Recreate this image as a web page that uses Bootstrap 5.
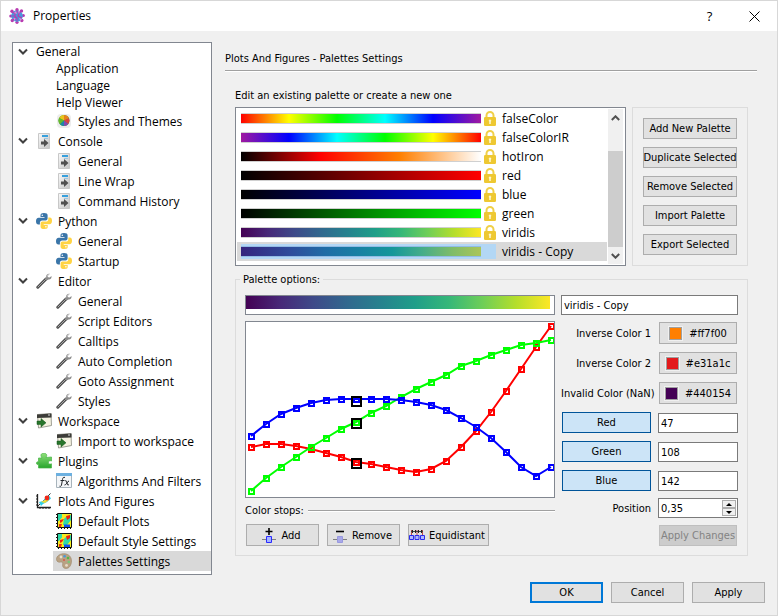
<!DOCTYPE html>
<html lang="en">
<head>
<meta charset="utf-8">
<meta name="viewport" content="width=device-width, initial-scale=1">
<title>Properties</title>
<link rel="stylesheet" href="https://cdn.jsdelivr.net/npm/bootstrap@5.3.0/dist/css/bootstrap.min.css">
<style>
  :root { --ui: "DejaVu Sans Condensed", "DejaVu Sans", sans-serif; --tree: "Open Sans", "Noto Sans", sans-serif; }
  body { background: #f0f0f0; color: #000; font: 11px/16px var(--ui); border: 1px solid #d7d7d7; }
  svg { display: block; flex: none; }
  .ic { width: 16px; height: 16px; }
  .titlebar { height: 30px; padding-left: 8px; font: 12px/16px var(--tree); }
  .titlebar button { width: 45px; height: 28px; font-size: 13px; }
  .plain { border: 0; background: none; padding: 0; color: inherit; }

  /* tree */
  .tree { width: 200px; margin: 11px 13px 0 11px; border: 1px solid #828790; font: 12px/16px var(--tree); }
  .tree ul { list-style: none; margin: 0; padding: 0; }
  .node { display: flex; align-items: center; gap: 6px; height: 20px; color: #000; text-decoration: none; white-space: nowrap; }
  .node span { padding-top: 1px; }
  .node.low { height: 17px; }
  .head { padding-left: 5px; }
  .head button { width: 10px; height: 10px; margin-right: 2px; }
  .kid { margin-left: 40px; padding-left: 3px; }
  .kid.chosen { background: #d9d9d9; }

  /* controls */
  .push { display: flex; align-items: center; justify-content: center; height: 21px; padding: 1px 0 0; border: 1px solid #adadad; border-radius: 0; background: #e1e1e1; color: #000; font: inherit; white-space: nowrap; }
  .push.tall { height: 22px; }
  .push.primary { border: 2px solid #0078d7; }
  .push.on { border-color: #005499; background: #cce4f7; }
  .push:disabled { border-color: #bfbfbf; background: #ccc; color: #838383; opacity: 1; }
  .dlg { width: 73px; }
  .stop-btn { gap: 4px; padding-right: 3px; }
  .field { height: 20px; min-width: 0; width: 100%; padding: 1px 2px 0; border: 1px solid #7a7a7a; border-radius: 0; background: #fff; color: #000; font: inherit; }
  .sunken { border: 1px solid #828790; background: #fff; }
  .rule { height: 2px; margin: 0; background: #a0a0a0; border-bottom: 1px solid #fff; }
  .frame { border: 1px solid #dcdcdc; }

  /* page column */
  .page { padding-top: 20px; margin-right: 20px; }
  .page .rule.title-rule { margin-top: 3px; }
  .page-body { padding: 16px 9px 0 10px; }
  .caption { margin-bottom: 3px; }
  .list { padding: 1px 2px 4px 1px; }
  .pal { display: flex; align-items: center; height: 19px; padding-left: 4px; margin-right: 1px; font: 12px/16px var(--tree); }
  .pal.chosen { background: #d9d9d9; }
  .pix { display: flex; align-items: center; gap: 3px; height: 15px; }
  .pal.chosen .pix { background: #b3d7f5; }
  .strip { height: 9px; box-shadow: 0 1px #d0d0d0, 0 -1px #d0d0d0; }
  .pal.chosen .strip { box-shadow: 0 1px #93bce4, 0 -1px #93bce4; }
  .lock { width: 12px; height: 15px; }
  .pal-name { width: 105px; margin-left: 6px; }
  .sbar { width: 15px; margin-bottom: -3px; background: #f0f0f0; }
  .sbar button { display: flex; width: 15px; height: 17px; align-items: center; justify-content: center; }
  .thumb { height: 96px; background: #cdcdcd; }
  .actions { width: 116px; margin-left: 6px; padding: 10px; }
  .actions .push { margin-bottom: 8px; width: 94px; }
  .options { padding: 8px 9px 9px; margin: 5px 0 0; min-width: 0; }
  .options legend { float: none; width: auto; margin: 0 0 0 -5px; padding: 1px 3px 0; font-size: 11px; line-height: 15px; }
  .opt-grid { display: grid; grid-template-columns: minmax(0, 1fr) 177px; column-gap: 6px; }
  .preview { height: 20px; padding: 0 4px 5px 0; }
  .preview div { height: 13px; }
  .chart-box { margin-top: 6px; }
  .chart { width: 100%; height: auto; }
  .stops-head { margin: 5px 0; }
  .stops { padding-left: 1px; }
  .props { display: grid; grid-template-columns: 90px minmax(0, 1fr); column-gap: 7px; row-gap: 8px; margin-top: 7px; align-items: center; }
  .props.tight { row-gap: 7px; }
  .props label { padding-top: 1px; text-align: right; white-space: nowrap; }
  .props .push { margin: 0 1px; }
  .props .push.on { margin: 0 0 0 1px; }
  .swatch { width: 13px; height: 13px; border: 1px solid #a0a0a0; outline: 1px solid #f0f0f0; margin-right: 7px; }
  .sw-1 { background: #ff7f00; }
  .sw-2 { background: #e31a1c; }
  .sw-3 { background: #440154; }
  .spin { height: 20px; padding: 1px; border: 1px solid #7a7a7a; background: #fff; }
  .spin .field { border: 0; height: 16px; padding: 1px 1px 0; }
  .spin button { display: flex; width: 14px; height: 8px; align-items: center; justify-content: center; border: 1px solid #adadad; background: #f0f0f0; padding: 0; }

  .g-false { background: linear-gradient(90deg, red, #ff0 20%, lime 40%, cyan 60%, blue 80%, #a01aa0); }
  .g-falseir { background: linear-gradient(90deg, #a01aa0, blue 20%, cyan 40%, lime 60%, #ff0 80%, red); }
  .g-iron { background: linear-gradient(90deg, #000, red 33%, #ff7f00 66%, #fff); }
  .g-red { background: linear-gradient(90deg, #000, red); }
  .g-blue { background: linear-gradient(90deg, #000, blue); }
  .g-green { background: linear-gradient(90deg, #000, lime); }
  .g-viridis { background: linear-gradient(90deg, #440154, #482878, #3e4a89, #31688e, #26828e, #1f9e89, #35b779, #6ece58, #b5de2b, #fde725); }
  .g-copy { background: linear-gradient(90deg, #35247d, #2f4b9b 20%, #1f6ca6 35%, #1782a3 50%, #15979a 63%, #43ac8a 75%, #7fbc69 88%, #abc559); }
  .dialog-foot { padding: 7px 12px 12px; gap: 8px; }
</style>
<script src="https://cdn.jsdelivr.net/npm/bootstrap@5.3.0/dist/js/bootstrap.bundle.min.js"></script>
</head>
<body class="d-flex flex-column min-vh-100">

<svg width="0" height="0" class="position-absolute" aria-hidden="true">
  <defs>
    <linearGradient id="paper" x2="1" y2="1"><stop stop-color="#fafafa"/><stop offset="1" stop-color="#c4c4c4"/></linearGradient>
    <linearGradient id="leaf" x2="0" y2="1"><stop stop-color="#8fe07a"/><stop offset="1" stop-color="#27a52c"/></linearGradient>
  </defs>
  <symbol id="i-chev" viewBox="0 0 10 10"><path d="M1 2.500l4 4 4-4" fill="none" stroke="#404040" stroke-width="2"/></symbol>
  <symbol id="i-app" viewBox="0 0 16 16">
    <g fill="#b83ab0"><circle cx="8" cy="1.800" r="1.700"/><circle cx="12.500" cy="3" r="1.700"/><circle cx="14.300" cy="7.500" r="1.600"/><circle cx="12.800" cy="12.500" r="1.700"/><circle cx="8" cy="14.300" r="1.600"/><circle cx="3.300" cy="12.500" r="1.700"/><circle cx="1.800" cy="8" r="1.600"/><circle cx="3" cy="3.300" r="1.700"/></g>
    <circle cx="8" cy="8" r="5.800" fill="#4a98dc"/>
    <path d="M3 4l3 1.500v3l2 1.500v3M12 3.500L10 5 9 8l4 2M3 8h3M4 12l3-3M8 2v3" fill="none" stroke="#b83ab0" stroke-width="1.200"/>
    <path d="M5 5l2-2 1 3zM10 10l3 1-1.500 2zM4.500 10l2 0-1 3zM9 3h2l-1 3z" fill="#e58ad8"/>
  </symbol>
  <symbol id="i-wheel" viewBox="0 0 16 16">
    <rect x="1" y="1" width="14" height="14" rx="4" fill="#ececec"/><circle cx="8" cy="7.500" r="5.500" fill="#3aa53f"/>
    <path d="M8 7.500V2a5.500 5.500 0 0 1 5 3.200z" fill="#e8801c"/><path d="M8 7.500V2A5.500 5.500 0 0 0 3.200 5z" fill="#e8c41c"/><path d="M8 7.500L3.200 5A5.500 5.500 0 0 0 4 11.300z" fill="#68b82c"/><path d="M8 7.500l-4 3.800A5.500 5.500 0 0 0 8 13z" fill="#1f86a8"/><path d="M8 7.500V13a5.500 5.500 0 0 0 4.500-2.300z" fill="#8648b0"/><path d="M8 7.500l4.500 3.200A5.500 5.500 0 0 0 13 5.200z" fill="#e04040"/>
  </symbol>
  <symbol id="i-console" viewBox="0 0 16 16">
    <path d="M2.500.5h11v15h-11z" fill="url(#paper)" stroke="#c8c8c8"/><path d="M6 2h6v2H6z" fill="#38a0dc"/><path d="M8 5h4v1H8z" fill="#9cc8e4"/>
    <path d="M5 8.500h3V6l4.500 4L8 14v-2.500H5z" fill="#505050"/>
  </symbol>
  <symbol id="i-python" viewBox="0 0 16 16">
    <path d="M8 0C5 0 4.500 1 4.500 2.300V4h4v.8H2.600C1 4.800 0 6 0 8.200s1 3.300 2.300 3.300h1.600V9.600c0-1.200 1-2.200 2.200-2.200h3.700c1 0 1.800-.8 1.800-1.800V2.300C11.600.8 10.500 0 8 0z" fill="#3a75a8"/>
    <path d="M8.200 16c3 0 3.500-1 3.500-2.300V12h-4v-.8h5.800c1.600 0 2.500-1.200 2.500-3.400s-.9-3.300-2.200-3.300h-1.500v1.900c0 1.200-1 2.200-2.200 2.200H6.400c-1 0-1.800.8-1.800 1.800v3.300c0 1.500 1.200 2.300 3.600 2.300z" fill="#ffd343"/>
    <circle cx="6.300" cy="2.200" r=".8" fill="#fff"/><circle cx="9.900" cy="13.800" r=".8" fill="#fff"/>
  </symbol>
  <symbol id="i-wrench" viewBox="0 0 16 16">
    <path d="M1.800 14.200L10 6" stroke="#4c4c4c" stroke-width="3" stroke-linecap="round"/><path d="M2 14l9-9" stroke="#a8a8a8" stroke-width="1" stroke-linecap="round"/>
    <path d="M13.800.8c-2-.5-4 1-3.800 3.200l-1 2 1.500 1.500 2-1c2 .2 3.500-1.500 3-3.500l-1.900 1.600-1.500-.4-.2-1.500z" fill="#8c8c8c"/><path d="M11 4.300l.3-2 2-1" stroke="#d8d8d8" stroke-width=".8" fill="none"/>
  </symbol>
  <symbol id="i-work" viewBox="0 0 16 16">
    <path d="M1.500 1.500L15 .5l.5 12-13 2.500z" fill="#f4f2e0" stroke="#8a8a80" stroke-width=".8"/><path d="M1 1.500L15.500.5v4L1 5z" fill="#3c3c38"/><path d="M12 2h2" stroke="#ddd"/>
    <path d="M1 8h4V5.500l5 4.300L5 14v-2.600H1z" fill="#28762c" stroke="#125016" stroke-width=".5"/>
  </symbol>
  <symbol id="i-plug" viewBox="0 0 16 16"><path d="M2.500 5H6C4 2 5 .3 7.800.3S11.500 2 10 4.500l5.500-.5v4c-2-.8-3 0-3 1.500s1.200 2 3 1.300V15h-13v-3.500C-.5 12 0 8 2.500 8.800z" fill="url(#leaf)" stroke="#48b545" stroke-width=".7"/></symbol>
  <symbol id="i-fx" viewBox="0 0 16 16"><path d="M.5.5h15v14H.5z" fill="#f4f6f8" stroke="#a8b4bc"/><path d="M0 0h16v3H0z" fill="#6cb0e0"/><path d="M9 4.500c-1.500-.8-2.200.2-2.500 2L5.500 12c-.3 1.300-1 1.700-2 1.200M4.500 7.500h4M9 8c1.500-.8 1.500 0 2 2s.7 2.500 2 1.500M13 8c-1.500 0-3 4.500-4.500 4" fill="none" stroke="#202428" stroke-width="1"/></symbol>
  <symbol id="i-plots" viewBox="0 0 16 16">
    <path d="M1.500 1v13.500H15" fill="none" stroke="#222" stroke-width="1.300"/><path d="M0 3h1M0 6h1M0 9h1M0 12h1M4 15v1M7 15v1M10 15v1M13 15v1" stroke="#222"/>
    <path d="M2 13L14.500.5" stroke="#333"/><path d="M3 9l4-1 3-4 3-1.500 2 3-4 3.500-4 2-2 2z" fill="#2fd0e8"/><path d="M5 9l4-2 2-3 2 3-4 3z" fill="#f4d830"/><circle cx="11" cy="5" r="2.400" fill="#f02818"/>
  </symbol>
  <symbol id="i-map" viewBox="0 0 16 16">
    <path d="M1.500.5h14v14h-14z" fill="#f6ee20"/>
    <path d="M2 1h4v4l-2 3H2zM8 5l7-3v5l-4 5H7z" fill="#30d8a8"/><path d="M9 1h3L8 6l-3 5-3 2V9z" fill="#f8e820"/><path d="M10 3l4-1v3l-3 2zM4 7l4-1-2 3-2 1z" fill="#f02010"/><path d="M8 11.500h6V14H8z" fill="#1050f0"/><path d="M3 11h3l-1 3H3z" fill="#f03010"/>
    <path d="M1.500.5h14v14h-14zM0 1.500h1M0 4.500h1M0 7.500h1M0 10.500h1M0 13.500h1M2.500 15v1M5.500 15v1M8.500 15v1M11.500 15v1M14.500 15v1" fill="none" stroke="#101010"/>
  </symbol>
  <symbol id="i-palette" viewBox="0 0 16 16">
    <path d="M9 .8C4 .3.3 3 .5 6.500c.2 2.600 2.400 3 4.200 2.600 1.500-.3 2.400.4 2 1.900-.5 2 .3 4.500 3.500 4.500 3 0 5.300-3.500 5.300-7.500S13 1.300 9 .8z" fill="#b9a284" stroke="#9c8668" stroke-width=".6"/>
    <circle cx="5" cy="4" r="1.400" fill="#e8e0d0"/><circle cx="8.600" cy="3.300" r="1.300" fill="#4898d8"/><circle cx="12" cy="5" r="1.300" fill="#50b848"/><circle cx="12.800" cy="9" r="1.300" fill="#78c878"/><circle cx="10.500" cy="12.400" r="1.400" fill="#e8dcc8"/><circle cx="8" cy="7" r="1" fill="#d85848"/>
  </symbol>
  <symbol id="i-lock" viewBox="0 0 12 15">
    <path d="M2.500 7V4.500a3.500 3.500 0 0 1 7 0V7" fill="none" stroke="#f0d048" stroke-width="2"/><rect y="6" width="12" height="9" rx="1.200" fill="#eec832"/><path d="M6 8.500a1.300 1.300 0 0 1 .8 2.300V13H5.200v-2.200A1.300 1.300 0 0 1 6 8.500z" fill="#fff6c8"/>
  </symbol>
  <symbol id="i-add" viewBox="0 0 16 16"><path d="M1 11.500h14" stroke="#808080"/><path d="M8 0v7M4.500 3.500h7" stroke="#000" stroke-width="1.600"/><path d="M5.500 8.500h5v6h-5z" fill="#a4b4ff" stroke="#2a2aff"/></symbol>
  <symbol id="i-rem" viewBox="0 0 16 16"><path d="M1 11.500h14" stroke="#808080"/><path d="M4 3.500h8" stroke="#000" stroke-width="1.600"/><path d="M5.500 8.500h5v6h-5z" fill="#a8a8e8" stroke="#9898e0"/></symbol>
  <symbol id="i-equi" viewBox="0 0 16 16"><path d="M2.500 2v5M8 2v5M13.500 2v5" stroke="#c04848"/><path d="M2 3.500h12" stroke="#444"/><path d="M3.500 2v3M6.500 2v3M9.500 2v3M12.500 2v3" stroke="#222"/><path d="M.5 7.500h4v4h-4zM6 7.500h4v4H6zM11.500 7.500h4v4h-4z" fill="#b0b8ff" stroke="#2a2aee"/></symbol>
</svg>

<header class="titlebar bg-white d-flex align-items-center">
  <svg class="ic"><use href="#i-app"/></svg>
  <span class="me-auto ms-1 ps-1">Properties</span>
  <button type="button" class="plain" aria-label="Help">?</button>
  <button type="button" class="plain d-flex align-items-center justify-content-center" aria-label="Close">
    <svg width="11" height="11" viewBox="0 0 11 11"><path d="M.5.5l10 10M10.500.5l-10 10" stroke="#000"/></svg>
  </button>
</header>

<main class="d-flex flex-grow-1">
  <nav class="tree bg-white flex-shrink-0" aria-label="Settings">
    <ul id="tree"></ul>
  </nav>

  <section class="page flex-grow-1">
    <div>Plots And Figures - Palettes Settings</div>
    <hr class="rule title-rule border-top-0 opacity-100">
    <div class="page-body">
      <div class="caption">Edit an existing palette or create a new one</div>
      <div class="d-flex">
        <div class="list sunken d-flex flex-grow-1">
          <div class="flex-grow-1" id="palettes"></div>
          <div class="sbar d-flex flex-column">
            <button type="button" class="plain" aria-label="Scroll up"><svg width="9" height="6" viewBox="0 0 9 6"><path d="M.8 5l3.700-3.700L8.200 5" fill="none" stroke="#505050" stroke-width="2"/></svg></button>
            <div class="thumb mt-auto"></div>
            <button type="button" class="plain" aria-label="Scroll down"><svg width="9" height="6" viewBox="0 0 9 6"><path d="M.8 1l3.700 3.700L8.200 1" fill="none" stroke="#505050" stroke-width="2"/></svg></button>
          </div>
        </div>
        <div class="actions frame flex-shrink-0">
          <button type="button" class="push">Add New Palette</button>
          <button type="button" class="push">Duplicate Selected</button>
          <button type="button" class="push">Remove Selected</button>
          <button type="button" class="push">Import Palette</button>
          <button type="button" class="push mb-0">Export Selected</button>
        </div>
      </div>

      <fieldset class="options frame">
        <legend>Palette options:</legend>
        <div class="opt-grid">
          <div>
            <div class="preview sunken"><div class="g-viridis"></div></div>
            <div class="sunken chart-box"><svg id="chart" class="chart" viewBox="0 0 308 175" role="img" aria-label="Colour channel curves"></svg></div>
            <div class="stops-head d-flex align-items-center">Color stops:<span class="rule flex-grow-1 ms-1"></span></div>
            <div class="stops d-flex gap-2">
              <button type="button" class="push tall stop-btn dlg"><svg class="ic"><use href="#i-add"/></svg>Add</button>
              <button type="button" class="push tall stop-btn dlg"><svg class="ic"><use href="#i-rem"/></svg>Remove</button>
              <button type="button" class="push tall stop-btn"><svg class="ic"><use href="#i-equi"/></svg>Equidistant</button>
            </div>
          </div>
          <div>
            <input class="field d-block" type="text" value="viridis - Copy" aria-label="Palette name">
            <div class="props">
              <label for="c1">Inverse Color 1</label>
              <button id="c1" type="button" class="push tall"><span class="swatch sw-1"></span>#ff7f00</button>
              <label for="c2">Inverse Color 2</label>
              <button id="c2" type="button" class="push tall"><span class="swatch sw-2"></span>#e31a1c</button>
              <label for="c3">Invalid Color (NaN)</label>
              <button id="c3" type="button" class="push tall"><span class="swatch sw-3"></span>#440154</button>
              <button type="button" class="push on" aria-pressed="true">Red</button>
              <input class="field" type="text" value="47" aria-label="Red value">
              <button type="button" class="push on" aria-pressed="true">Green</button>
              <input class="field" type="text" value="108" aria-label="Green value">
              <button type="button" class="push on" aria-pressed="true">Blue</button>
              <input class="field" type="text" value="142" aria-label="Blue value">
            </div>
            <div class="props tight">
              <label for="pos">Position</label>
              <div class="spin d-flex">
                <input id="pos" class="field" type="text" value="0,35">
                <div>
                  <button type="button" aria-label="Increase"><svg width="6" height="3" viewBox="0 0 6 3"><path d="M3 0l3 3H0z"/></svg></button>
                  <button type="button" aria-label="Decrease"><svg width="6" height="3" viewBox="0 0 6 3"><path d="M3 3l3-3H0z"/></svg></button>
                </div>
              </div>
              <span></span>
              <button type="button" class="push" disabled>Apply Changes</button>
            </div>
          </div>
        </div>
      </fieldset>
    </div>
  </section>
</main>

<footer class="dialog-foot d-flex justify-content-end">
  <button type="button" class="push dlg primary">OK</button>
  <button type="button" class="push dlg">Cancel</button>
  <button type="button" class="push dlg">Apply</button>
</footer>

<script>
  const icon = (n, c = 'ic') => `<svg class="${c}" aria-hidden="true"><use href="#i-${n}"/></svg>`;

  const groups = [
    ['General', '', [['Application'], ['Language'], ['Help Viewer'], ['Styles and Themes', 'wheel']]],
    ['Console', 'console', [['General', 'console'], ['Line Wrap', 'console'], ['Command History', 'console']]],
    ['Python', 'python', [['General', 'python'], ['Startup', 'python']]],
    ['Editor', 'wrench', ['General', 'Script Editors', 'Calltips', 'Auto Completion', 'Goto Assignment', 'Styles'].map(t => [t, 'wrench'])],
    ['Workspace', 'work', [['Import to workspace', 'work']]],
    ['Plugins', 'plug', [['Algorithms And Filters', 'fx']]],
    ['Plots And Figures', 'plots', [['Default Plots', 'map'], ['Default Style Settings', 'map'], ['Palettes Settings', 'palette']]]
  ];
  document.getElementById('tree').innerHTML = groups.map(([name, ic, kids]) => `
    <li>
      <div class="node head ${ic ? '' : 'low'}"><button type="button" class="plain" aria-label="Collapse ${name}"><svg width="10" height="10"><use href="#i-chev"/></svg></button>${ic ? icon(ic) : ''}<span>${name}</span></div>
      <ul>${kids.map(([t, k]) => `<li><a href="#" class="node kid ${k ? '' : 'low'} ${t === 'Palettes Settings' ? 'chosen' : ''}">${k ? icon(k) : ''}<span>${t}</span></a></li>`).join('')}</ul>
    </li>`).join('');

  const palettes = [['falseColor', 'false'], ['falseColorIR', 'falseir'], ['hotIron', 'iron'], ['red', 'red'], ['blue', 'blue'], ['green', 'green'], ['viridis', 'viridis'], ['viridis - Copy', 'copy']];
  document.getElementById('palettes').innerHTML = palettes.map(([t, g]) => `
    <div class="pal ${g === 'copy' ? 'chosen' : ''}"><div class="pix flex-grow-1"><div class="strip flex-grow-1 g-${g}"></div>${g === 'copy' ? '<span class="lock"></span>' : icon('lock', 'lock')}</div><span class="pal-name">${t}</span></div>`).join('');

  const curves = {
    '#f00': [125,122,122,124,127,131,135,140,142,145,148,150,147,139,125,109,90,69,47,25,4],
    '#0f0': [169,156,145,135,125,116,107,100,91,84,75,67,60,53,44,39,33,28,23,21,18],
    '#00f': [114,102,92,86,81,78,77,77,77,77,78,80,83,88,96,105,116,130,145,154,145]
  };
  let art = '';
  for (const [color, ys] of Object.entries(curves)) {
    art += `<g fill="none" stroke="${color}" stroke-width="2"><polyline points="${ys.map((y, i) => `${5 + 15 * i},${y}`).join(' ')}"/>`;
    art += ys.map((y, i) => `<rect x="${3 + 15 * i}" y="${y - 2}" width="5" height="5" shape-rendering="crispEdges"/>`).join('') + '</g>';
  }
  art += [75, 97, 137].map(y => `<rect x="106" y="${y}" width="9" height="9" fill="none" stroke="#000" stroke-width="2" shape-rendering="crispEdges"/>`).join('');
  document.getElementById('chart').innerHTML = art;
</script>
</body>
</html>
